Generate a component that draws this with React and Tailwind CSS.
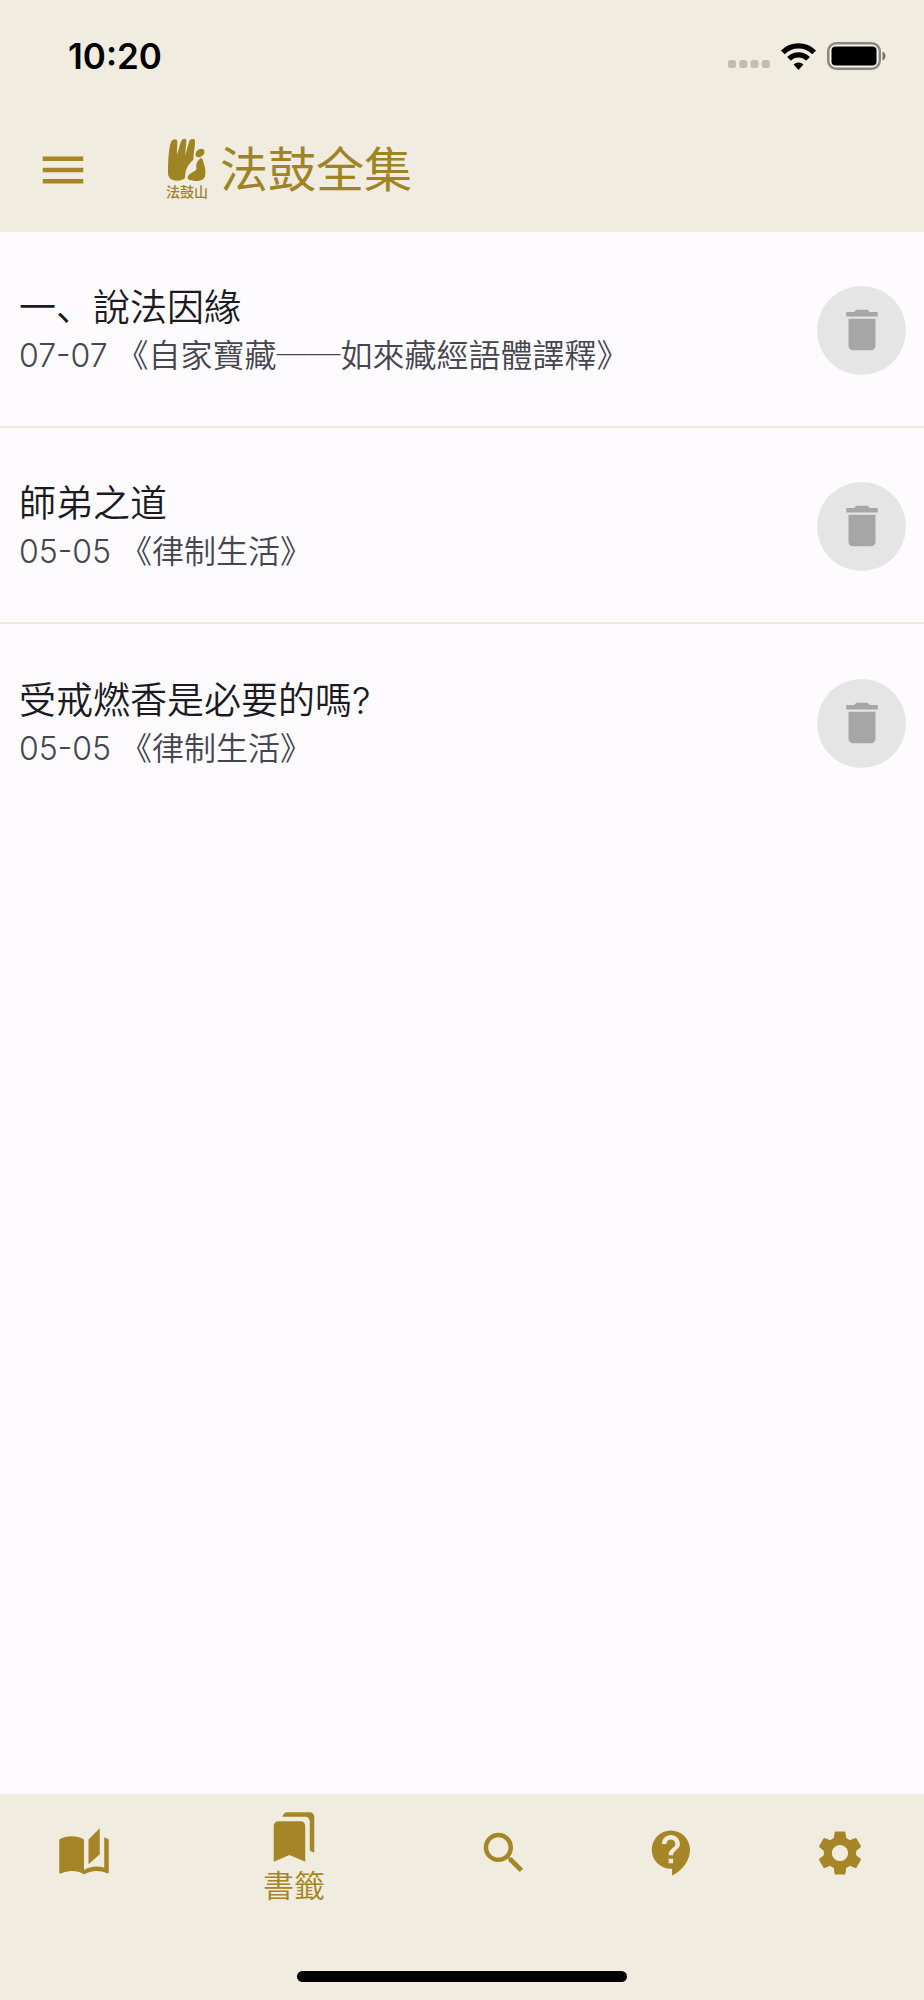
import { MdAutoStories, MdBookmarks, MdContactSupport, MdDelete, MdMenu, MdSearch, MdSettings } from "react-icons/md";

const bookmarks = [
  { title: "一、說法因緣", source: "07-07 《自家寶藏──如來藏經語體譯釋》" },
  { title: "師弟之道", source: "05-05 《律制生活》" },
  { title: "受戒燃香是必要的嗎?", source: "05-05 《律制生活》" },
];

const tabs = [
  { label: "經書", Icon: MdAutoStories },
  { label: "書籤", Icon: MdBookmarks, active: true },
  { label: "搜尋", Icon: MdSearch },
  { label: "說明", Icon: MdContactSupport },
  { label: "設定", Icon: MdSettings },
];

function StatusBar() {
  return (
    <div className="flex h-28 items-center justify-between pl-17 pr-[38px]">
      <time className="text-[35px] leading-none font-semibold text-black">10:20</time>
      <div className="flex items-center gap-[11px]">
        <svg className="mt-4 h-2 w-[42px]" viewBox="0 0 42 8" fill="#c1bdb1" aria-hidden="true">
          <rect x="0" width="8" height="8" rx="2.5" />
          <rect x="11.3" width="8" height="8" rx="2.5" />
          <rect x="22.5" width="8" height="8" rx="2.5" />
          <rect x="33.8" width="8" height="8" rx="2.5" />
        </svg>
        <svg className="h-[27px] w-[35px]" viewBox="0 0 35 27" fill="none" stroke="#000" strokeWidth="5.4" aria-hidden="true">
          <path d="M1.8 9.4a22.2 22.2 0 0 1 31.4 0" />
          <path d="M8 15.8a13.4 13.4 0 0 1 19 0" />
          <path d="M12.6 21.6a7 7 0 0 1 9.8 0L17.5 27z" fill="#000" stroke="none" />
        </svg>
        <svg className="h-7 w-[59px]" viewBox="0 0 59 28" aria-hidden="true">
          <rect x="1.25" y="1.25" width="51.5" height="25.5" rx="8" fill="#f5f3ec" stroke="#8a877d" strokeWidth="2.5" />
          <rect x="4.500" y="4.5" width="45" height="19" rx="4" fill="#000" />
          <path d="M55.500 9.5c4 1.5 4 7.5 0 9z" fill="#77756d" />
        </svg>
      </div>
    </div>
  );
}

function Logo() {
  return (
    <a href="#home" className="flex items-center gap-3 text-[#9f8426]">
      <span className="flex flex-col items-center">
        <svg className="h-11 w-10" viewBox="55 42 118 132" fill="currentColor" aria-hidden="true">
          <path d="M57 140C57 105 60 70 66 54C70 44 84 43 85 52C86 62 83 76 84 92C89 77 92 62 97 51C101 42 112 42 112 50C113 62 108 78 109 94C114 76 117 62 121 51C125 43 138 43 138 51C139 66 133 86 133 108C120 118 108 134 108 162C98 173 72 173 62 162C57 156 57 150 57 140Z" />
          <ellipse cx="153" cy="87" rx="15" ry="11" transform="rotate(-40 153 87)" />
          <path d="M152 105C156 99 160 103 162 110C166 122 171 138 169 153C167 168 152 172 138 171C126 171 114 167 116 160C117 152 125 148 132 144C140 141 144 137 142 130C140 121 146 110 152 105Z" />
        </svg>
        <span className="text-[14px] leading-5 font-medium">法鼓山</span>
      </span>
      <span className="text-[48px] leading-none">法鼓全集</span>
    </a>
  );
}

export default function App() {
  return (
    <div className="flex min-h-screen flex-col bg-[#fefbff] font-['Inter','Noto_Sans_CJK_SC',sans-serif]" lang="zh-Hans">
      <header className="bg-[#f0ecdf] pb-1">
        <StatusBar />
        <div className="flex h-[116px] items-center gap-19 pl-9">
          <button type="button" aria-label="選單" className="text-[#a58526]">
            <MdMenu className="size-[54px]" />
          </button>
          <Logo />
        </div>
      </header>

      <main className="grow">
        <ul className="divide-y-2 divide-[#ede8da]">
          {bookmarks.map(({ title, source }) => (
            <li key={title} className="flex h-[196px] items-center justify-between pt-0.5 pr-[18px] pl-[19px]">
              <div className="pt-1 font-[350]">
                <h2 className="text-[37px] leading-12 text-[#1b1b1f]">{title}</h2>
                <p className="text-[32px] leading-12 text-[#46464f]">{source}</p>
              </div>
              <button
                type="button"
                aria-label={`刪除 ${title}`}
                className="flex size-[89px] items-center justify-center rounded-full bg-[#e5e5e5] text-[#a6a6a6]"
              >
                <MdDelete className="size-[54px]" />
              </button>
            </li>
          ))}
        </ul>
      </main>

      <footer className="bg-[#f0ecdf] pb-[18px]">
        <nav className="flex h-[177px] pb-[59px] text-[#a58526]">
          {tabs.map(({ label, Icon, active }) =>
            active ? (
              <a key={label} href="#bookmarks" aria-current="page" className="flex grow-3 basis-0 flex-col items-center justify-center pt-3">
                <Icon className="size-[54px]" />
                <span className="text-[31px] leading-11 font-[350]">{label}</span>
              </a>
            ) : (
              <button key={label} type="button" aria-label={label} className="flex grow-2 basis-0 items-center justify-center">
                <Icon className="size-[54px]" />
              </button>
            ),
          )}
        </nav>
        <div className="mx-auto h-[11px] w-[330px] rounded-full bg-black" />
      </footer>
    </div>
  );
}
